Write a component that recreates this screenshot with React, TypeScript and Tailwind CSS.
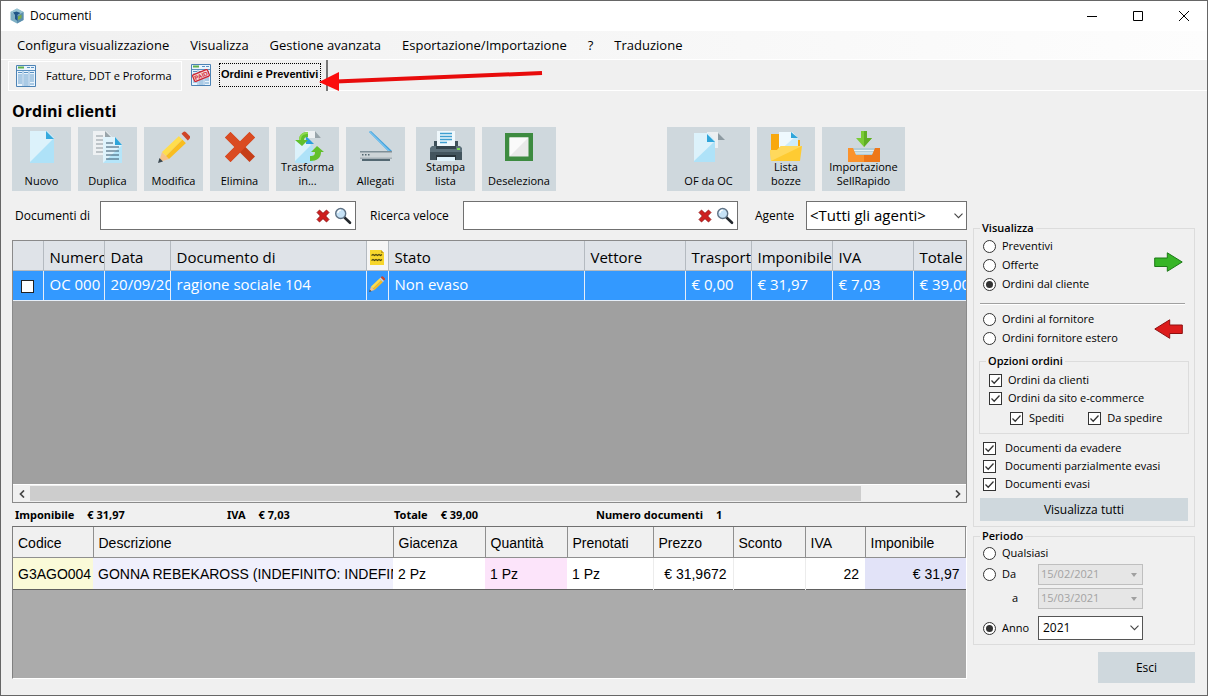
import React from "react";

type Children = { children?: React.ReactNode };

/* ---------- icons ---------- */

function Ico({ children }: Children) {
  return (
    <svg viewBox="0 0 32 32" className="-mb-1 size-8 shrink-0" aria-hidden="true">
      {children}
    </svg>
  );
}

function NewIcon() {
  return (
    <Ico>
      <path d="M4 0h17l7 7v25H4z" fill="#aee2f8" />
      <path d="M4 0h17l7 7L4 31z" fill="#dcf2fb" />
      <path d="M20 0v8h8z" fill="#35aade" />
    </Ico>
  );
}

function CopyIcon() {
  return (
    <Ico>
      <path d="M1 0h13l6 6v18H1z" fill="#eef1f3" />
      <path d="M13 0l6 6h-6z" fill="#98a4aa" />
      <path d="M4 5h7M4 9h7M4 13h7M4 17h7M4 21h7" stroke="#8e989e" />
      <path d="M11 6h12l7 8v18H11z" fill="#b5e5f9" />
      <path d="M11 6h12l7 8L11 32z" fill="#dff3fc" />
      <path d="M23 6v8h7z" fill="#2fa5da" />
      <path d="M14 12h7M14 16h13M14 20h13M14 24h13M14 28h13" stroke="#37556b" strokeWidth="1.2" />
    </Ico>
  );
}

function PencilIcon({ className = "-mb-1 size-8 shrink-0" }: { className?: string }) {
  return (
    <svg viewBox="0 0 32 32" className={className} aria-hidden="true">
      <path d="M1 31l3-10 7 7z" fill="#f6c28a" />
      <path d="M0 32l1.500-5 3.500 3.500z" fill="#3b4850" />
      <path d="M4 21L21 5l3.500 3.500L8 25z" fill="#ffdd4d" />
      <path d="M8 25L24.500 8.500 28 12 11 28z" fill="#f9bd20" />
      <path d="M21 5l2.500-2.200 6.800 6.800L28 12z" fill="#cfd8dc" />
      <path d="M23.500 2.800L25 1.200q1.500-1.500 3 0l3.500 3.500q1.500 1.500 0 3l-1.700 1.900z" fill="#cf4527" />
    </svg>
  );
}

function DeleteIcon() {
  return (
    <Ico>
      <path d="M6.500 1L16 10.500 25.500 1 31 6.500 21.500 16 31 25.500 25.500 31 16 21.500 6.500 31 1 25.500 10.500 16 1 6.500z" fill="#c63e18" />
      <path d="M6.500 1L16 10.500 25.500 1 31 6.500 6.500 31 1 25.500 10.500 16 1 6.500z" fill="#da4b22" />
    </Ico>
  );
}

function TransformIcon() {
  return (
    <Ico>
      <path d="M13 0h10l6 7H16z" fill="#eef1f3" />
      <path d="M23 0l6 7h-6z" fill="#98a4aa" />
      <path d="M3 9h11l7 6v17H3z" fill="#aee2f8" />
      <path d="M3 9h11l5 5L3 30z" fill="#dcf2fb" />
      <path d="M14 5v8h8z" fill="#2d9ede" />
      <path d="M16 1v5c-3 0-4 1-4 3h4l-6 6-7-6h4c0-5 3-8 9-8z" fill="#62c02c" />
      <path d="M18 30v-5c4 0 5-1 5-4h-4l6-6 7 6h-3c0 6-4 9-11 9z" fill="#62c02c" />
      <path d="M3 9h4c0-5 3-8 9-8v2c-5 0-7 2-7 6z" fill="#8edb4e" />
    </Ico>
  );
}

function ScannerIcon() {
  return (
    <Ico>
      <path d="M9 1l2-1 21 20h-4z" fill="#42a0dc" />
      <path d="M9 1l1-1 20 20h-2z" fill="#79c4ef" />
      <path d="M0 20h32v8H0z" fill="#cdd4d7" />
      <path d="M0 20h32v1.500H0z" fill="#7f8f97" />
      <path d="M0 26.500h32V28H0z" fill="#a5b0b6" />
      <path d="M2 23h1.500v1.500H2zM5 23h1.500v1.500H5zM8 23h1.500v1.500H8z" fill="#53666f" />
      <path d="M2 28h28v2H2z" fill="#546872" />
    </Ico>
  );
}

function PrinterIcon() {
  return (
    <Ico>
      <path d="M7 0h18v16H7z" fill="#eff8fc" />
      <path d="M10 2.500h12M10 5.500h12M10 8.500h12M10 11.500h7" stroke="#3f9fd0" strokeWidth="1.300" />
      <path d="M4 10h3v6h18v-6h3v6H4z" fill="#3e5059" />
      <path d="M2 15h28l2 2v10H0V17z" fill="#5d717b" />
      <path d="M0 21h32v8H0z" fill="#42545d" />
      <path d="M6 15h20v3H6z" fill="#34444c" />
      <path d="M27 17h3v2h-3z" fill="#7ed957" />
      <path d="M6 24h20v5H6z" fill="#263238" />
      <path d="M7 26h18v4H7z" fill="#dff2fb" />
    </Ico>
  );
}

function DeselectIcon() {
  return (
    <Ico>
      <path d="M2 2h28v28H2z" fill="#3d8b40" />
      <path d="M6.500 6.500h19v19h-19z" fill="#e9e9e9" />
      <path d="M6.500 6.500h19l-19 19z" fill="#fafafa" />
    </Ico>
  );
}

function OrderFromIcon() {
  return (
    <Ico>
      <path d="M14 1h11v16H14z" fill="#eceff1" />
      <path d="M25 2l7 7h-7z" fill="#8d9aa1" />
      <path d="M1 2h14l7 8v21H1z" fill="#aee2f8" />
      <path d="M1 2h14l7 8L1 30z" fill="#dcf2fb" />
      <path d="M14 3v8h8z" fill="#2fa5da" />
    </Ico>
  );
}

function DraftsIcon() {
  return (
    <Ico>
      <path d="M1 3h10v27H1z" fill="#f8a80e" />
      <path d="M1 9h29v18H1z" fill="#f8a80e" />
      <path d="M9 1h13l6 6v14H9z" fill="#cdecfa" />
      <path d="M9 1h13l4 4L9 20z" fill="#eff9fe" />
      <path d="M21 1v6h7z" fill="#2fa5da" />
      <path d="M0 19h7l4-4h21l-2 15H1z" fill="#fecb32" />
      <path d="M0 19h7l4-4h21L1 30z" fill="#ffd95c" />
    </Ico>
  );
}

function ImportIcon() {
  return (
    <Ico>
      <path d="M4 17h24l3 8H1z" fill="#b2ccd6" />
      <path d="M6 19.500h20M5 22h22" stroke="#e6f1f5" />
      <path d="M0 17h5l3 7h8v7H0z" fill="#fb922c" />
      <path d="M32 17h-5l-3 7h-8v7h16z" fill="#ee7718" />
      <path d="M13 0h6v7h5l-8 9-8-9h5z" fill="#7acb35" />
      <path d="M16 0h3v7h5l-8 9z" fill="#5fae24" />
    </Ico>
  );
}

function ClearIcon() {
  return (
    <svg viewBox="0 0 14 14" className="size-[14px]" aria-hidden="true">
      <path d="M3.500 1L7 4.300 10.500 1 13 3.500 9.700 7 13 10.500 10.500 13 7 9.700 3.500 13 1 10.500 4.300 7 1 3.500z" fill="#cf1f1f" stroke="#8c1010" strokeWidth=".8" strokeLinejoin="round" />
    </svg>
  );
}

function SearchIcon() {
  return (
    <svg viewBox="0 0 18 18" className="size-[18px]" aria-hidden="true">
      <path d="M10.500 10.500L16 15.800" stroke="#23282d" strokeWidth="2.600" strokeLinecap="round" />
      <circle cx="6.700" cy="6.500" r="5" fill="#c6e2f6" stroke="#5f7285" strokeWidth="1.400" />
      <path d="M3.800 6a3.200 3.200 0 0 1 3-2.800" stroke="#fff" strokeWidth="1.300" fill="none" />
    </svg>
  );
}

function Chevron() {
  return (
    <svg viewBox="0 0 9 6" className="pointer-events-none col-start-1 row-start-1 mr-1 h-[6px] w-[9px] self-center justify-self-end" aria-hidden="true">
      <path d="M.5.7l4 4 4-4" stroke="#444" fill="none" strokeWidth="1.100" />
    </svg>
  );
}

function SheetIcon({ paid = false }: { paid?: boolean }) {
  return (
    <svg viewBox="0 0 20 22" className="h-[22px] w-5 shrink-0" aria-hidden="true">
      <path d="M.5.5h19v21H.5z" fill="#eaf4fc" stroke="#4d83b5" />
      <path d="M2 2.500h6" stroke="#5fb04b" strokeWidth="2" />
      <path d="M11 2.500h3M15 2.500h3M1 5.500h18M2 7.500h4M8 7.500h4M14 7.500h4" stroke="#5b91c2" />
      <path d="M2 10h4M2 12h4M2 14h4M2 16h4M2 18h4M8 10h4M8 12h4M8 14h4M8 16h4M8 18h4M14 10h4M14 12h4M14 14h4M14 16h4M14 19h4M8 20h4" stroke="#5f97c9" strokeWidth=".9" />
      <path d="M7 6v15M13 6v15" stroke="#8fb6da" />
      {paid && (
        <g transform="rotate(-22 10 11.500)">
          <rect x="2" y="8" width="16" height="7" rx="1" fill="#f6d5d7" stroke="#cf2530" strokeWidth="1.200" />
          <text x="10" y="13.800" textAnchor="middle" fontSize="6" fontWeight="700" fill="#cf2530">PAID</text>
        </g>
      )}
    </svg>
  );
}

function AppIcon() {
  return (
    <svg viewBox="0 0 14 16" className="h-4 w-[14px]" aria-hidden="true">
      <path d="M7 .5L13.500 4v8L7 15.500.5 12V4z" fill="#7fb0c4" />
      <path d="M7 .5L13.500 4 7 8 .5 4z" fill="#98c4d3" />
      <path d="M7 8l6.500-4v8L7 15.500z" fill="#5c8fae" />
      <path d="M3 4.500l3.500-1 4 1.500L7.500 7v6L5 11V7z" fill="#1f5587" />
      <path d="M8 8.500l3.500-2v3.500l-3.500 2z" fill="#7fae45" />
    </svg>
  );
}

function NoteIcon() {
  return (
    <svg viewBox="0 0 14 15" className="mx-auto h-[15px] w-[14px]" aria-hidden="true">
      <path d="M0 0h11l3 3v12H0z" fill="#f7d62c" />
      <path d="M11 0l3 3h-3z" fill="#c9a313" />
      <path d="M1.500 5.500l1.500-1 1.500 1 1.500-1 1.500 1 1.500-1 1.500 1 1.500-1M1.500 10.500l1.500-1 1.500 1 1.500-1 1.500 1 1.500-1 1.500 1 1.500-1" stroke="#4d4611" fill="none" strokeWidth="1.200" />
    </svg>
  );
}

function GreenArrow() {
  return (
    <svg viewBox="0 0 29 20" className="h-5 w-[29px]" aria-hidden="true">
      <path d="M.7 6h12.600V.8L28.200 10 13.300 19.300V14.500H.7z" fill="#37b527" stroke="#1d7a17" strokeLinejoin="round" />
    </svg>
  );
}

function RedArrow() {
  return (
    <svg viewBox="0 0 29 20" className="h-5 w-[29px]" aria-hidden="true">
      <path d="M28.300 6H15.700V.8L.8 10l14.900 9.300V14.500h12.600z" fill="#dd1c1c" stroke="#8e1010" strokeLinejoin="round" />
    </svg>
  );
}

/* ---------- controls ---------- */

function ToolButton({ icon, width, children }: Children & { icon: React.ReactNode; width: string }) {
  return (
    <button type="button" className={`flex h-16 shrink-0 flex-col items-center bg-[#cfd8dd] pt-1 pb-[3px] text-[11px] leading-[14px] ${width}`}>
      {icon}
      <span className="relative mt-auto">{children}</span>
    </button>
  );
}

function Check({ children, gap = "gap-[6px]" }: Children & { gap?: string }) {
  return (
    <label className={`flex h-[18px] items-center ${gap}`}>
      <span className="grid">
        <input type="checkbox" defaultChecked className="peer col-start-1 row-start-1 size-[13px] appearance-none border border-[#333] bg-white" />
        <svg viewBox="0 0 13 13" className="pointer-events-none invisible col-start-1 row-start-1 size-[13px] peer-checked:visible" aria-hidden="true">
          <path d="M2.500 6.500l2.700 2.700 5.300-5.700" fill="none" stroke="#333" strokeWidth="1.300" />
        </svg>
      </span>
      {children}
    </label>
  );
}

function Radio({ name, checked, children }: Children & { name: string; checked?: boolean }) {
  return (
    <label className="flex h-[19px] items-center gap-[6px]">
      <input
        type="radio"
        name={name}
        defaultChecked={checked}
        className="grid size-[13px] shrink-0 appearance-none place-content-center rounded-full border border-[#333] bg-white before:size-[7px] before:rounded-full checked:before:bg-[#333]"
      />
      {children}
    </label>
  );
}

function SearchBox({ id, className }: { id: string; className: string }) {
  return (
    <div className={`flex h-[29px] items-center border border-[#707070] bg-white pr-[3px] ${className}`}>
      <input id={id} type="text" className="h-full min-w-0 flex-1 px-1 text-sm outline-none" />
      <button type="button" aria-label="Cancella" className="mr-1">
        <ClearIcon />
      </button>
      <button type="button" aria-label="Cerca">
        <SearchIcon />
      </button>
    </div>
  );
}

function DateBox({ label, value }: { label: string; value: string }) {
  return (
    <div className="grid w-[105px]">
      <select aria-label={label} disabled className="col-start-1 row-start-1 h-[21px] w-full appearance-none border border-[#bfbfbf] bg-[#e6e6e6] px-[2px] text-[11px] text-[#a3a3a3] opacity-100">
        <option>{value}</option>
      </select>
      <svg viewBox="0 0 6 4" className="pointer-events-none col-start-1 row-start-1 mr-[6px] h-1 w-[6px] self-center justify-self-end" aria-hidden="true">
        <path d="M0 0h6L3 4z" fill="#a0a0a0" />
      </svg>
    </div>
  );
}

function Total({ label, value, width }: { label: string; value: string; width: string }) {
  return (
    <div className={`flex gap-[13px] ${width}`}>
      <dt>{label}</dt>
      <dd>{value}</dd>
    </div>
  );
}

/* ---------- data ---------- */

const orderCols = [
  { w: "w-[30px]", head: "", cell: "" },
  { w: "w-[61px]", head: "Numero", cell: "OC 000" },
  { w: "w-[66px]", head: "Data", cell: "20/09/20" },
  { w: "w-[196px]", head: "Documento di", cell: "ragione sociale 104" },
  { w: "w-[22px]", head: "note", cell: "note" },
  { w: "w-[196px]", head: "Stato", cell: "Non evaso" },
  { w: "w-[101px]", head: "Vettore", cell: "" },
  { w: "w-[66px]", head: "Trasporto", cell: "€ 0,00" },
  { w: "w-[81px]", head: "Imponibile", cell: "€ 31,97" },
  { w: "w-[81px]", head: "IVA", cell: "€ 7,03" },
  { w: "", head: "Totale", cell: "€ 39,00" },
];

const lineCols = [
  { w: "w-[80px]", head: "Codice", cell: "G3AGO004", style: "bg-[#fafad8]" },
  { w: "w-[300px]", head: "Descrizione", cell: "GONNA REBEKAROSS (INDEFINITO: INDEFIN", style: "bg-[#f0f0fc]" },
  { w: "w-[92px]", head: "Giacenza", cell: "2 Pz", style: "bg-white" },
  { w: "w-[82px]", head: "Quantità", cell: "1 Pz", style: "bg-[#fce4fa]" },
  { w: "w-[86px]", head: "Prenotati", cell: "1 Pz", style: "bg-white border-r border-r-[#ececec]" },
  { w: "w-[80px]", head: "Prezzo", cell: "€ 31,9672", style: "bg-white border-r border-r-[#ececec] text-right" },
  { w: "w-[72px]", head: "Sconto", cell: "", style: "bg-white border-r border-r-[#ececec]" },
  { w: "w-[60px]", head: "IVA", cell: "22", style: "bg-white text-right" },
  { w: "", head: "Imponibile", cell: "€ 31,97", style: "bg-[#e2e3f8] text-right" },
];

const menu = ["Configura visualizzazione", "Visualizza", "Gestione avanzata", "Esportazione/Importazione", "?", "Traduzione"];

/* ---------- page ---------- */

export default function App() {
  return (
    <div className="relative flex min-h-screen flex-col border border-[#666] bg-[#f0f0f0] font-['Open_Sans','Noto_Sans',sans-serif] text-[11px] text-black">
      <header className="flex h-[30px] items-center bg-white pl-[9px] text-[12px]">
        <AppIcon />
        <span className="ml-[6px] flex-1">Documenti</span>
        <button type="button" aria-label="Riduci a icona" className="grid h-full w-[46px] place-items-center">
          <svg viewBox="0 0 10 10" className="size-[10px]"><path d="M0 5.500h10" stroke="#000" /></svg>
        </button>
        <button type="button" aria-label="Ingrandisci" className="grid h-full w-[46px] place-items-center">
          <svg viewBox="0 0 10 10" className="size-[10px]"><path d="M.5.5h9v9h-9z" fill="none" stroke="#000" /></svg>
        </button>
        <button type="button" aria-label="Chiudi" className="grid h-full w-[46px] place-items-center">
          <svg viewBox="0 0 10 10" className="size-[10px]"><path d="M0 0l10 10M10 0L0 10" stroke="#000" /></svg>
        </button>
      </header>

      <nav className="flex h-7 items-center gap-[21px] bg-linear-to-r from-[#f0f0f0] to-[#fdfdfd] pt-[2px] pl-4 text-[13px]">
        {menu.map((m) => (
          <button key={m} type="button">{m}</button>
        ))}
      </nav>

      <div role="tablist" className="flex h-8 border-t border-white pl-[7px]">
        <button type="button" role="tab" aria-selected="false" className="mt-px flex w-[174px] items-center gap-[10px] border border-white pl-[7px] whitespace-nowrap">
          <SheetIcon />
          Fatture, DDT e Proforma
        </button>
        <button type="button" role="tab" aria-selected="true" className="flex w-[146px] items-center gap-[8px] border-r-2 border-[#777] pb-[2px] pl-[9px] font-['Liberation_Sans',Arial,sans-serif] font-bold">
          <SheetIcon paid />
          <span className="flex h-6 w-[102px] items-center border border-dotted border-black pl-px whitespace-nowrap">Ordini e Preventivi</span>
        </button>
        <div className="flex-1 border-b border-white" />
      </div>

      <div className="flex flex-1 gap-[6px] pr-3 pb-[11px] pl-[11px]">
        <main className="flex min-w-0 flex-1 flex-col pb-[5px]">
          <h1 className="flex h-9 items-center pt-1 text-[16px] font-bold">Ordini clienti</h1>

          <div className="flex gap-[7px]">
            <ToolButton icon={<NewIcon />} width="w-[59px]">Nuovo</ToolButton>
            <ToolButton icon={<CopyIcon />} width="w-[59px]">Duplica</ToolButton>
            <ToolButton icon={<PencilIcon />} width="w-[59px]">Modifica</ToolButton>
            <ToolButton icon={<DeleteIcon />} width="w-[59px]">Elimina</ToolButton>
            <ToolButton icon={<TransformIcon />} width="w-[63px]">Trasforma<br />in...</ToolButton>
            <ToolButton icon={<ScannerIcon />} width="w-[59px]">Allegati</ToolButton>
            <ToolButton icon={<PrinterIcon />} width="w-[59px] ml-1">Stampa<br />lista</ToolButton>
            <ToolButton icon={<DeselectIcon />} width="w-[74px]">Deseleziona</ToolButton>
            <ToolButton icon={<OrderFromIcon />} width="w-[83px] ml-[104px]">OF da OC</ToolButton>
            <ToolButton icon={<DraftsIcon />} width="w-[58px]">Lista<br />bozze</ToolButton>
            <ToolButton icon={<ImportIcon />} width="w-[83px]">Importazione<br />SellRapido</ToolButton>
          </div>

          <div className="mt-[10px] flex items-center text-[12px]">
            <label htmlFor="doc" className="w-[88px] shrink-0 pl-[3px]">Documenti di</label>
            <SearchBox id="doc" className="w-[256px]" />
            <label htmlFor="quick" className="w-[107px] shrink-0 pl-[14px]">Ricerca veloce</label>
            <SearchBox id="quick" className="w-[275px]" />
            <label htmlFor="agent" className="w-[68px] shrink-0 pl-[17px]">Agente</label>
            <div className="grid min-w-0 flex-1">
              <select id="agent" className="col-start-1 row-start-1 h-[29px] w-full appearance-none border border-[#707070] bg-white pl-[3px] text-[15px]">
                <option>&lt;Tutti gli agenti&gt;</option>
              </select>
              <Chevron />
            </div>
          </div>

          <div className="mt-[10px] flex flex-1 flex-col border border-[#8a8a8a] bg-[#a0a0a0]">
            <table className="w-full table-fixed border-collapse text-left text-[15px] leading-5">
              <colgroup>
                {orderCols.map((c, i) => <col key={i} className={c.w} />)}
              </colgroup>
              <thead>
                <tr className="h-[29px] bg-[#dfe3e8]">
                  {orderCols.map((c, i) => (
                    <th key={i} scope="col" className={`overflow-hidden border-r border-b border-[#b4bac0] pt-1 font-normal whitespace-nowrap last:border-r-0 ${c.head === "note" ? "bg-[#f5f5f5]" : "pl-[6px]"}`}>
                      {c.head === "note" ? <NoteIcon /> : c.head}
                    </th>
                  ))}
                </tr>
              </thead>
              <tbody>
                <tr className="h-[30px] bg-[#3399ff] text-white">
                  {orderCols.map((c, i) => (
                    <td key={i} className={`overflow-hidden border-r border-b border-[#e6eef8] pb-[2px] whitespace-nowrap last:border-r-0 ${c.cell === "note" ? "" : "pl-[6px]"}`}>
                      {i === 0 ? (
                        <input type="checkbox" aria-label="Seleziona OC 000" className="mt-1 ml-[2px] block size-[13px] appearance-none border border-[#222] bg-white" />
                      ) : c.cell === "note" ? (
                        <PencilIcon className="mx-auto size-4" />
                      ) : (
                        c.cell
                      )}
                    </td>
                  ))}
                </tr>
              </tbody>
            </table>
            <div className="mt-auto flex h-[18px] items-center border-t border-white bg-[#f0f0f0]">
              <button type="button" aria-label="Scorri a sinistra" className="grid w-[17px] place-items-center">
                <svg viewBox="0 0 6 8" className="h-2 w-[6px]"><path d="M5 .5L1.500 4 5 7.500" fill="none" stroke="#444" strokeWidth="1.700" /></svg>
              </button>
              <div className="h-[15px] flex-1">
                <div className="h-full w-19/21 bg-[#cdcdcd]" />
              </div>
              <button type="button" aria-label="Scorri a destra" className="grid w-[17px] place-items-center">
                <svg viewBox="0 0 6 8" className="h-2 w-[6px]"><path d="M1 .5L4.500 4 1 7.500" fill="none" stroke="#444" strokeWidth="1.700" /></svg>
              </button>
            </div>
          </div>

          <dl className="flex h-[23px] items-center pt-px pl-[3px] font-['Noto_Sans',sans-serif] font-bold">
            <Total label="Imponibile" value="€ 31,97" width="w-[212px]" />
            <Total label="IVA" value="€ 7,03" width="w-[167px]" />
            <Total label="Totale" value="€ 39,00" width="w-[202px]" />
            <Total label="Numero documenti" value="1" width="" />
          </dl>

          <div className="h-[153px] border border-t-[#707070] border-r-white border-b-white border-l-[#808080] bg-[#ababab]">
            <table className="w-full table-fixed border-collapse text-left font-['Liberation_Sans',Arial,sans-serif] text-[14px]">
              <colgroup>
                {lineCols.map((c) => <col key={c.head} className={c.w} />)}
              </colgroup>
              <thead>
                <tr className="h-[30px] bg-[#f0f0f0]">
                  {lineCols.map((c) => (
                    <th key={c.head} scope="col" className="overflow-hidden border-r border-b border-[#8f8f8f] pt-[3px] pl-[5px] font-normal whitespace-nowrap">{c.head}</th>
                  ))}
                </tr>
              </thead>
              <tbody>
                <tr className="h-8 border-b border-[#606060]">
                  {lineCols.map((c) => (
                    <td key={c.head} className={`overflow-hidden pt-[2px] pr-[6px] pl-[5px] whitespace-nowrap ${c.style}`}>{c.cell}</td>
                  ))}
                </tr>
              </tbody>
            </table>
          </div>
        </main>

        <aside className="flex w-[222px] shrink-0 flex-col pt-[129px]">
          <fieldset className="min-w-0 border border-[#dcdcdc] px-[5px] pb-[5px]">
            <legend className="ml-px px-[2px] leading-4 font-semibold">Visualizza</legend>
            <div className="flex items-center justify-between pt-px pr-[6px] pl-1">
              <div>
                <Radio name="tipo">Preventivi</Radio>
                <Radio name="tipo">Offerte</Radio>
                <Radio name="tipo" checked>Ordini dal cliente</Radio>
              </div>
              <div className="pb-2"><GreenArrow /></div>
            </div>
            <hr className="mt-[9px] mr-1 mb-[5px] ml-px h-[2px] border-t border-b border-t-[#a0a0a0] border-b-white" />
            <div className="flex items-center justify-between pr-[6px] pl-1">
              <div>
                <Radio name="tipo">Ordini al fornitore</Radio>
                <Radio name="tipo">Ordini fornitore estero</Radio>
              </div>
              <RedArrow />
            </div>

            <fieldset className="mt-[5px] min-w-0 border border-[#dcdcdc] pr-1 pb-[6px] pl-[9px]">
              <legend className="-ml-[3px] px-[2px] leading-4 font-semibold">Opzioni ordini</legend>
              <div className="pt-[2px]">
                <Check>Ordini da clienti</Check>
                <Check>Ordini da sito e-commerce</Check>
                <div className="mt-[2px] flex gap-6 pl-[21px]">
                  <Check>Spediti</Check>
                  <Check>Da spedire</Check>
                </div>
              </div>
            </fieldset>

            <div className="mt-[5px] pl-1">
              <Check gap="gap-[9px]">Documenti da evadere</Check>
              <Check gap="gap-[9px]">Documenti parzialmente evasi</Check>
              <Check gap="gap-[9px]">Documenti evasi</Check>
            </div>
            <div className="mt-[5px] flex px-px">
              <button type="button" className="h-[23px] flex-1 bg-[#cfd8dd] text-[12px]">Visualizza tutti</button>
            </div>
          </fieldset>

          <fieldset className="mt-px min-w-0 border border-[#dcdcdc] px-[6px] pb-1">
            <legend className="px-[2px] leading-4 font-semibold">Periodo</legend>
            <div className="pl-[3px]">
              <Radio name="periodo">Qualsiasi</Radio>
              <div className="mt-px flex items-center">
                <div className="w-[55px]"><Radio name="periodo">Da</Radio></div>
                <DateBox label="Da" value="15/02/2021" />
              </div>
              <div className="mt-[3px] flex items-center">
                <div className="w-[55px] pl-[29px]">a</div>
                <DateBox label="a" value="15/03/2021" />
              </div>
              <div className="mt-[7px] flex items-center">
                <div className="w-[55px]"><Radio name="periodo" checked>Anno</Radio></div>
                <div className="grid w-[105px]">
                  <select aria-label="Anno" className="col-start-1 row-start-1 h-6 w-full appearance-none border border-[#555] bg-white px-1 text-[12px]">
                    <option>2021</option>
                  </select>
                  <Chevron />
                </div>
              </div>
            </div>
          </fieldset>

          <button type="button" className="mt-[7px] h-[31px] w-[97px] self-end bg-[#cfd8dd] text-[12px]">Esci</button>
        </aside>
      </div>

      <svg viewBox="0 0 224 22" className="pointer-events-none absolute top-[68px] left-[318px] h-[22px] w-[224px]" aria-hidden="true">
        <path d="M17 12.500L223 4" stroke="#e80c0c" strokeWidth="4" />
        <path d="M0 13L20 3v19z" fill="#fb0d0d" />
      </svg>
    </div>
  );
}
